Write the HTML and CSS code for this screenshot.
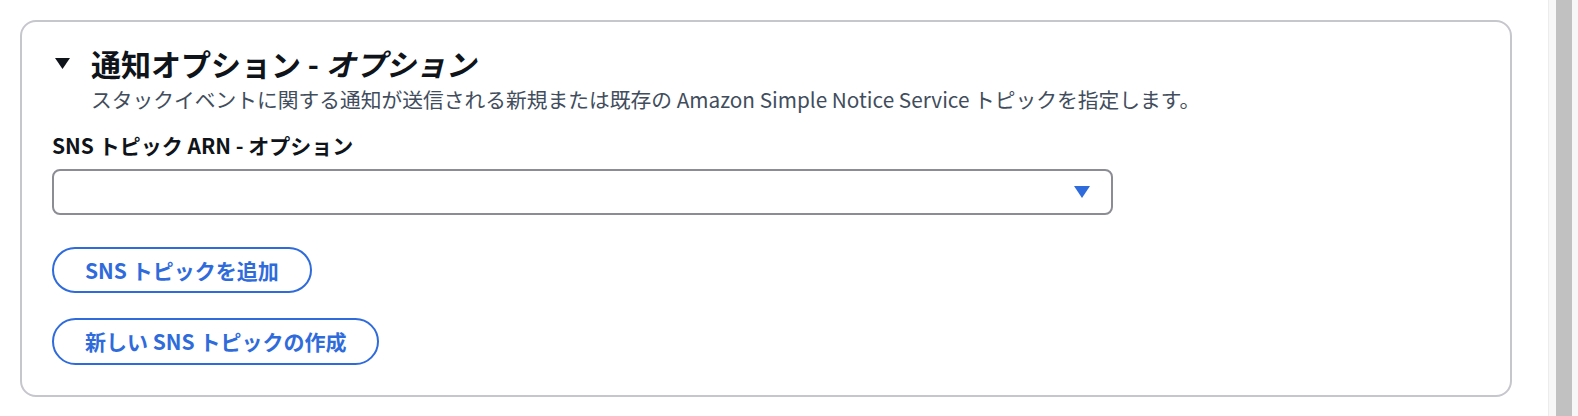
FILE: index.html
```html
<!DOCTYPE html>
<html lang="ja">
<head>
<meta charset="utf-8">
<title>通知オプション</title>
<link rel="stylesheet" href="styles.css">
</head>
<body>
<div class="page">
  <main class="main">
    <section class="card">
      <header class="card-header">
        <span class="caret">
          <svg width="15" height="11" viewBox="0 0 15 11"><polygon points="0,0 15,0 7.5,11" fill="#0f141a"/></svg>
        </span>
        <div class="header-text">
          <h2 class="title">通知オプション - <i class="opt">オプション</i></h2>
          <p class="desc">スタックイベントに関する通知が送信される新規または既存の Amazon Simple Notice Service トピックを指定します。</p>
        </div>
      </header>
      <div class="field">
        <label class="label">SNS トピック ARN - オプション</label>
        <div class="select">
          <svg class="select-arrow" width="16" height="12" viewBox="0 0 16 12"><polygon points="0,0 16,0 8,12" fill="#2f6bdb"/></svg>
        </div>
      </div>
      <div class="actions">
        <button class="btn">SNS トピックを追加</button>
        <button class="btn">新しい SNS トピックの作成</button>
      </div>
    </section>
  </main>
  <div class="scrollbar"><div class="thumb"></div></div>
</div>
</body>
</html>
```
FILE: styles.css
```css
html, body {
  margin: 0;
  padding: 0;
  background: #ffffff;
}
body {
  font-family: "Noto Sans CJK JP", "Noto Sans", sans-serif;
  color: #0f141a;
}
.page {
  display: flex;
  height: 416px;
  overflow: hidden;
}
.main {
  flex: 1;
  padding: 20px 36px 0 20px;
}
.card {
  box-sizing: border-box;
  height: 377px;
  border: 2px solid #c6c6cd;
  border-radius: 16px;
  padding: 23px 30px 0 30px;
}
.card-header {
  display: flex;
  align-items: flex-start;
}
.caret {
  width: 39px;
  flex: none;
  padding-top: 13px;
  padding-left: 3px;
  box-sizing: border-box;
  display: flex;
}
.title {
  margin: 0;
  font-size: 30px;
  line-height: 36px;
  font-weight: 700;
  color: #0f141a;
}
.opt {
  font-style: italic;
}
.desc {
  margin: 3px 0 0 0;
  font-size: 20.75px;
  line-height: 30px;
  color: #414d5c;
}
.field {
  margin-top: 16px;
  display: flex;
  flex-direction: column;
}
.label {
  font-size: 21px;
  line-height: 30px;
  font-weight: 700;
  color: #0f141a;
}
.select {
  margin-top: 9px;
  width: 1061px;
  height: 46px;
  box-sizing: border-box;
  border: 2px solid #8c8c94;
  border-radius: 8px;
  display: flex;
  align-items: center;
  justify-content: flex-end;
  padding-right: 21px;
}
.actions {
  margin-top: 32px;
  display: flex;
  flex-direction: column;
  align-items: flex-start;
  gap: 25px;
}
.btn {
  font-family: "Noto Sans CJK JP", "Noto Sans", sans-serif;
  font-size: 21px;
  font-weight: 700;
  color: #2f6bdb;
  background: #ffffff;
  border: 2px solid #2f6bdb;
  border-radius: 24px;
  height: 46px;
  padding: 0 31px;
  line-height: 1;
  box-sizing: border-box;
}
.btn + .btn {
  height: 47px;
}
.scrollbar {
  width: 30px;
  flex: none;
  box-sizing: border-box;
  background: #f7f7f7;
  border-left: 1px solid #ececec;
  padding: 0 6px 0 7px;
  display: flex;
}
.thumb {
  flex: 1;
  background: #c1c1c1;
}
```
